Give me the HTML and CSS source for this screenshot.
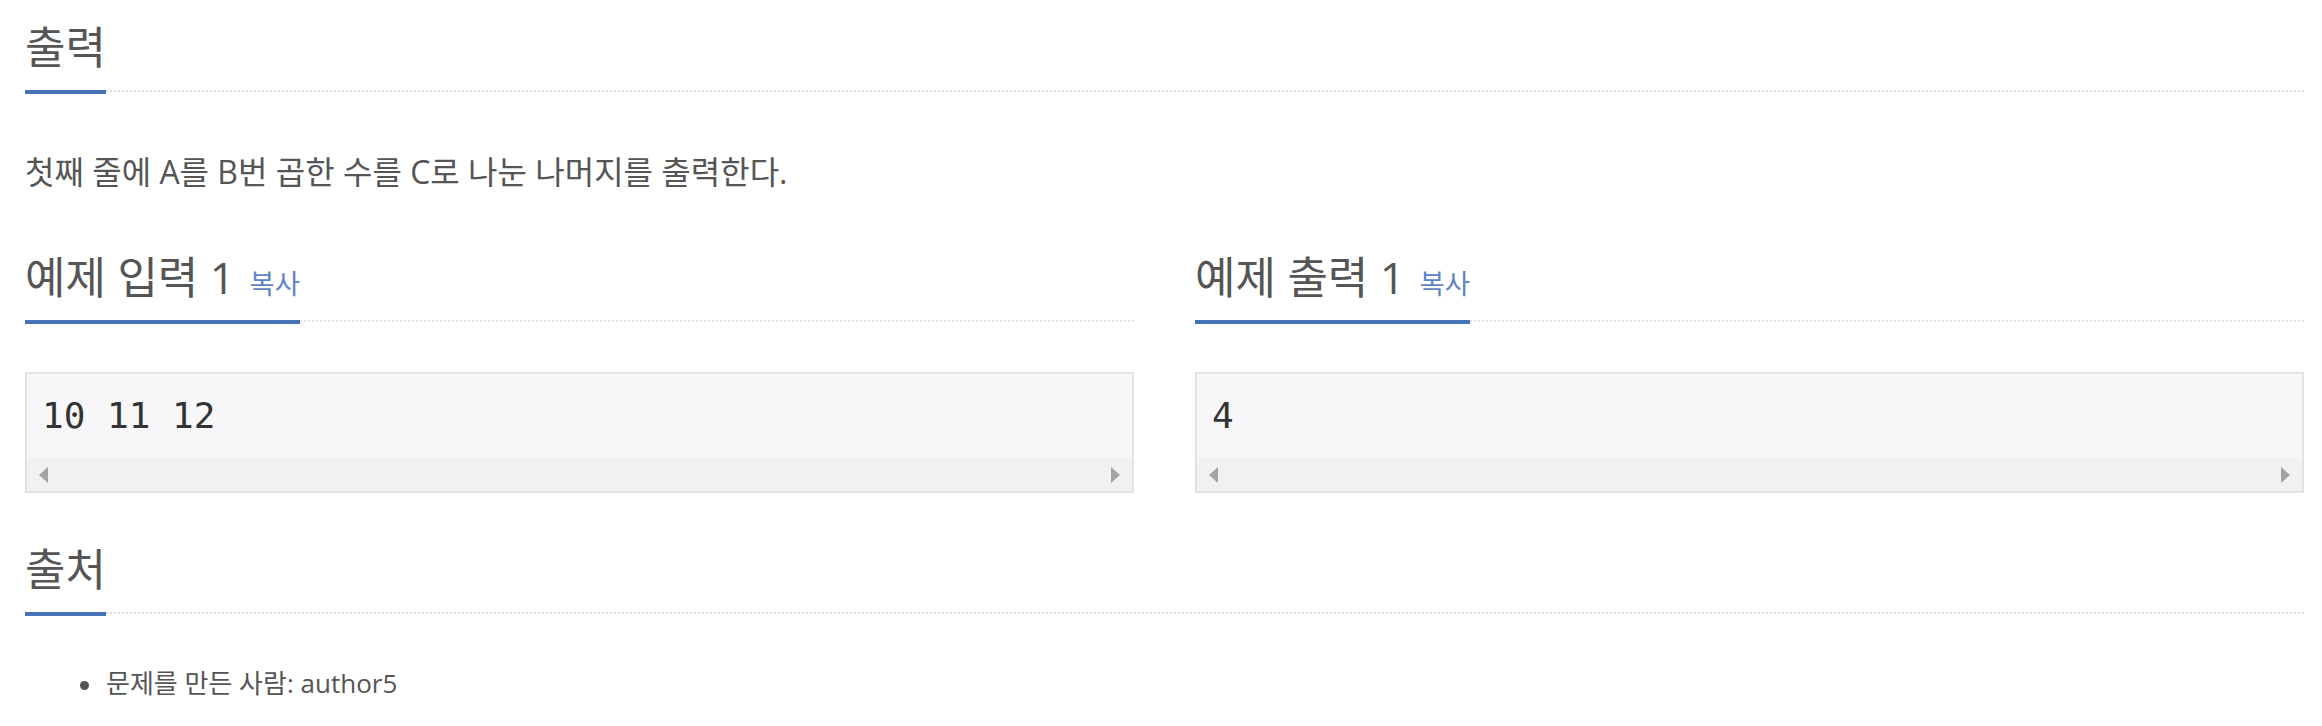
FILE: index.html
```html
<!DOCTYPE html>
<html lang="ko">
<head>
<meta charset="utf-8">
<title>문제</title>
<link rel="stylesheet" href="styles.css">
</head>
<body>
<div class="page">
  <section class="sec sec-output">
    <div class="headline"><h2>출력</h2></div>
    <p class="problem-text">첫째 줄에 A를 B번 곱한 수를 C로 나눈 나머지를 출력한다.</p>
  </section>

  <div class="row">
    <section class="sec sec-sample">
      <div class="headline"><h2>예제 입력 1 <span class="copy-button">복사</span></h2></div>
      <div class="sample">
        <pre class="sampledata">10 11 12</pre>
        <div class="hscroll"><span class="arrow arrow-left"></span><span class="arrow arrow-right"></span></div>
      </div>
    </section>
    <section class="sec sec-sample">
      <div class="headline"><h2>예제 출력 1 <span class="copy-button">복사</span></h2></div>
      <div class="sample">
        <pre class="sampledata">4</pre>
        <div class="hscroll"><span class="arrow arrow-left"></span><span class="arrow arrow-right"></span></div>
      </div>
    </section>
  </div>

  <section class="sec sec-source">
    <div class="headline"><h2>출처</h2></div>
    <ul class="source-list">
      <li>문제를 만든 사람: author5</li>
    </ul>
  </section>
</div>
</body>
</html>
```

FILE: styles.css
```css
html, body {
  margin: 0;
  padding: 0;
  background: #fff;
}

body {
  font-family: "Open Sans", "Noto Sans CJK KR", sans-serif;
  color: #555;
}

.page {
  padding: 25px 18px 0 25px;
}

.headline {
  display: flex;
  align-items: flex-start;
  border-bottom: 2px dotted #e2e2e7;
}

.headline h2 {
  margin: 0 0 -4px 0;
  padding: 0 0 20px 0;
  font-size: 44px;
  line-height: 45px;
  font-weight: 400;
  color: #555;
  border-bottom: 4px solid #4672b8;
  white-space: nowrap;
}

.copy-button {
  font-size: 27.5px;
  line-height: 27px;
  color: #5f85c8;
  padding-left: 3px;
}

.sec-output .headline {
  margin-bottom: 57px;
}

.problem-text {
  margin: 0;
  font-size: 32px;
  line-height: 45px;
}

.row {
  display: grid;
  grid-template-columns: 1fr 1fr;
  column-gap: 61px;
  margin-top: 61px;
}

.sample {
  margin-top: 50px;
  border: 2px solid #e1e1e8;
  background: #f7f7f9;
}

.sampledata {
  margin: 0;
  padding: 19px 15px;
  font-family: "DejaVu Sans Mono", monospace;
  font-size: 36px;
  line-height: 46px;
  color: #333;
}

.hscroll {
  height: 33px;
  background: #f1f1f1;
  display: flex;
  align-items: center;
  justify-content: space-between;
  padding: 0 12px;
}

.arrow {
  width: 0;
  height: 0;
  border-top: 8px solid transparent;
  border-bottom: 8px solid transparent;
}

.arrow-left {
  border-right: 9px solid #a3a3a3;
}

.arrow-right {
  border-left: 9px solid #a3a3a3;
}

.sec-source {
  margin-top: 54px;
}

.source-list {
  list-style: none;
  margin: 52px 0 0 0;
  padding: 0 0 0 55px;
}

.source-list li {
  display: flex;
  align-items: center;
  font-size: 26px;
  line-height: 35px;
}

.source-list li::before {
  content: "";
  width: 9px;
  height: 9px;
  border-radius: 50%;
  background: #555;
  margin-right: 17px;
  margin-top: 4px;
  flex: none;
}
```
